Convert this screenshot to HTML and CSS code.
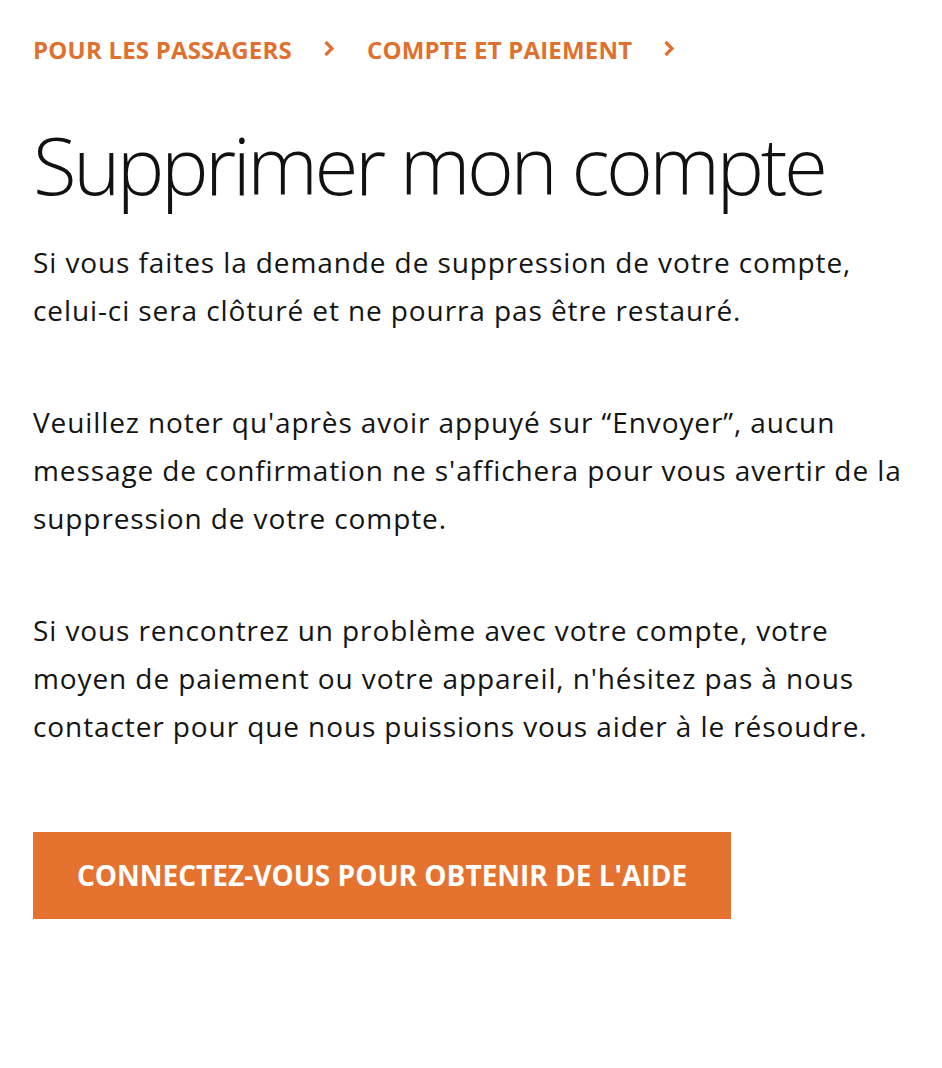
FILE: index.html
```html
<!DOCTYPE html>
<html lang="fr">
<head>
<meta charset="utf-8">
<title>Supprimer mon compte</title>
<link rel="stylesheet" href="styles.css">
</head>
<body>
<main class="page">
  <nav class="crumbs">
    <a class="crumb" href="#">POUR LES PASSAGERS</a>
    <svg class="sep" width="12" height="17" viewBox="0 0 12 17" aria-hidden="true"><polyline points="2.5,2 9,8.5 2.5,15" fill="none" stroke="#e0702e" stroke-width="3.2" stroke-linecap="butt" stroke-linejoin="miter"/></svg>
    <a class="crumb" href="#">COMPTE ET PAIEMENT</a>
    <svg class="sep" width="12" height="17" viewBox="0 0 12 17" aria-hidden="true"><polyline points="2.5,2 9,8.5 2.5,15" fill="none" stroke="#e0702e" stroke-width="3.2" stroke-linecap="butt" stroke-linejoin="miter"/></svg>
  </nav>
  <h1 class="title">Supprimer mon compte</h1>
  <p class="para">Si vous faites la demande de suppression de votre compte,<br>celui-ci sera clôturé et ne pourra pas être restauré.</p>
  <p class="para">Veuillez noter qu'après avoir appuyé sur “Envoyer”, aucun<br>message de confirmation ne s'affichera pour vous avertir de la<br>suppression de votre compte.</p>
  <p class="para">Si vous rencontrez un problème avec votre compte, votre<br>moyen de paiement ou votre appareil, n'hésitez pas à nous<br>contacter pour que nous puissions vous aider à le résoudre.</p>
  <a class="btn" href="#">CONNECTEZ-VOUS POUR OBTENIR DE L'AIDE</a>
</main>
</body>
</html>
```
FILE: styles.css
```css
html, body {
  margin: 0;
  padding: 0;
  background: #ffffff;
}
body {
  font-family: "Open Sans", "Noto Sans", sans-serif;
  color: #141414;
}
.page {
  padding: 30px 8px 0 33px;
  display: flex;
  flex-direction: column;
  align-items: flex-start;
}
.crumbs {
  display: flex;
  align-items: center;
  height: 38px;
}
.crumb {
  color: #e0702e;
  font-weight: 700;
  font-size: 24px;
  letter-spacing: 0.2px;
  text-decoration: none;
  white-space: nowrap;
}
.sep {
  display: block;
  margin: 0 32px 0 31px;
  position: relative;
  top: -1px;
}
.title {
  font-family: "Open Sans", sans-serif;
  font-weight: 300;
  font-size: 80px;
  letter-spacing: -3.5px;
  line-height: 1;
  margin: 56px 0 34px 0;
  color: #111;
  white-space: nowrap;
}
.para {
  font-size: 28px;
  line-height: 48px;
  letter-spacing: 0.9px;
  margin: 0 0 64px 0;
  white-space: nowrap;
}
.btn {
  display: block;
  width: 698px;
  height: 87px;
  line-height: 87px;
  text-align: center;
  background: #e5732f;
  color: #ffffff;
  font-weight: 700;
  font-size: 28px;
  letter-spacing: 0;
  text-decoration: none;
  margin-top: 18px;
  white-space: nowrap;
}
```
